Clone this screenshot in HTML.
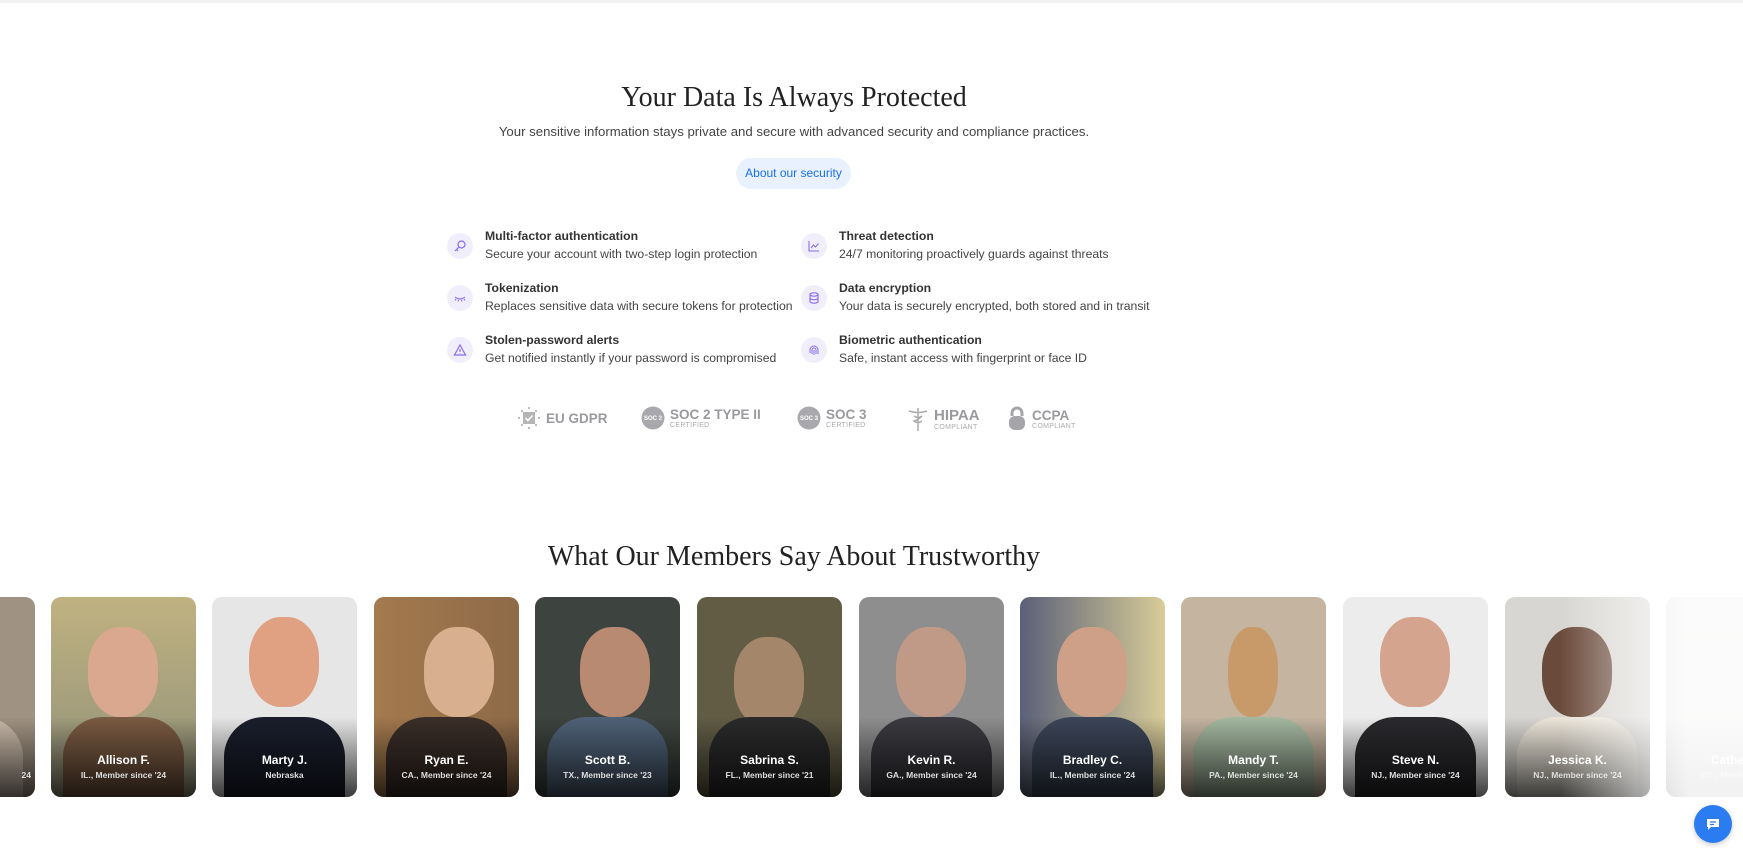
<!DOCTYPE html>
<html><head><meta charset="utf-8"><style>
*{margin:0;padding:0;box-sizing:border-box}
body{width:1743px;height:848px;overflow:hidden;background:#fff;font-family:"Liberation Sans",sans-serif;position:relative;color:#333}
.topline{position:absolute;left:0;top:0;width:1743px;height:3px;background:#f1f1f3}
.h{position:absolute;left:0;width:1588px;text-align:center;font-family:"Liberation Serif",serif;color:#222;font-size:28px}
.sub{position:absolute;top:124px;left:0;width:1588px;text-align:center;font-size:13.2px;color:#444}
.btn{position:absolute;left:736px;top:158px;width:115px;height:31px;border-radius:16px;background:#e8f1fd;color:#1a6fe8;font-size:12px;text-align:center;line-height:31px}
.f{position:absolute}
.ic{position:absolute;left:0;top:0;width:26px;height:26px;border-radius:50%;background:#f1eefc;display:flex;align-items:center;justify-content:center}
.ft{position:absolute;left:38px;top:-4px;white-space:nowrap;font-size:12.2px;color:#333;font-weight:bold}
.fd{position:absolute;left:38px;top:14px;white-space:nowrap;font-size:12.2px;color:#444}
.logo{position:absolute;top:406px;color:#9a9a9e;font-weight:bold;font-size:13.5px;display:flex;align-items:center;gap:5px}
.logo small{display:block;font-size:7px;font-weight:normal;color:#aaa;letter-spacing:.3px}
.card{position:absolute;top:597px;width:145px;height:200px;border-radius:10px;overflow:hidden}
.card .ov{position:absolute;left:0;right:0;bottom:0;height:80px;background:linear-gradient(rgba(0,0,0,0),rgba(0,0,0,.75))}
.card .n{position:absolute;left:0;right:0;top:156px;text-align:center;color:#fff;font-weight:bold;font-size:12px}
.card .m{position:absolute;left:0;right:0;top:173px;text-align:center;color:#ddd;font-weight:bold;font-size:8.5px}
.face{position:absolute;left:37px;top:30px;width:70px;height:90px;border-radius:45%;}
.body{position:absolute;left:12px;top:120px;width:121px;height:90px;border-radius:40px 40px 0 0}
.fade{position:absolute;left:1560px;top:590px;width:183px;height:215px;background:linear-gradient(90deg,rgba(255,255,255,0),rgba(255,255,255,.85) 70%)}
.chat{position:absolute;left:1694px;top:805px;width:38px;height:38px;border-radius:50%;background:#2b7cf0;display:flex;align-items:center;justify-content:center;box-shadow:0 2px 6px rgba(0,0,0,.2)}
</style></head><body>
<div class="topline"></div>
<div class="h" style="top:82px">Your Data Is Always Protected</div>
<div class="sub">Your sensitive information stays private and secure with advanced security and compliance practices.</div>
<div class="btn">About our security</div>

<div class="f" style="left:447px;top:233px"><div class="ic"><svg width="14" height="14" viewBox="0 0 14 14" fill="none" stroke="#8b6cf0" stroke-width="1.2"><circle cx="8.5" cy="5.5" r="3.5"/><path d="M6 8L2 12M3.5 10.5l1.5 1.5"/></svg></div><div class="ft">Multi-factor authentication</div><div class="fd">Secure your account with two-step login protection</div></div>
<div class="f" style="left:447px;top:285px"><div class="ic"><svg width="14" height="14" viewBox="0 0 14 14" fill="none" stroke="#8b6cf0" stroke-width="1.1"><path d="M2 6q5 4 10 0M3 8l-1 1.5M5.5 9l-.5 1.5M8.5 9l.5 1.5M11 8l1 1.5"/></svg></div><div class="ft">Tokenization</div><div class="fd">Replaces sensitive data with secure tokens for protection</div></div>
<div class="f" style="left:447px;top:337px"><div class="ic"><svg width="14" height="14" viewBox="0 0 14 14" fill="none" stroke="#8b6cf0" stroke-width="1.2"><path d="M7 2L1.5 12h11z M7 6v3M7 10.3v.5"/></svg></div><div class="ft">Stolen-password alerts</div><div class="fd">Get notified instantly if your password is compromised</div></div>
<div class="f" style="left:801px;top:233px"><div class="ic"><svg width="14" height="14" viewBox="0 0 14 14" fill="none" stroke="#8b6cf0" stroke-width="1.1"><path d="M2 2v10h10M4 9l2.5-3 2 2 3-3.5"/></svg></div><div class="ft">Threat detection</div><div class="fd">24/7 monitoring proactively guards against threats</div></div>
<div class="f" style="left:801px;top:285px"><div class="ic"><svg width="14" height="14" viewBox="0 0 14 14" fill="none" stroke="#8b6cf0" stroke-width="1.2"><ellipse cx="7" cy="3.5" rx="4" ry="1.7"/><path d="M3 3.5v7c0 1 1.8 1.7 4 1.7s4-.7 4-1.7v-7M3 7c0 1 1.8 1.7 4 1.7S11 8 11 7"/></svg></div><div class="ft">Data encryption</div><div class="fd">Your data is securely encrypted, both stored and in transit</div></div>
<div class="f" style="left:801px;top:337px"><div class="ic"><svg width="14" height="14" viewBox="0 0 14 14" fill="none" stroke="#8b6cf0" stroke-width="1"><path d="M3 10V7a4 4 0 018 0v4M5 11V7a2 2 0 014 0v4M7 7v5"/></svg></div><div class="ft">Biometric authentication</div><div class="fd">Safe, instant access with fingerprint or face ID</div></div>

<div class="logo" style="left:517px"><svg width="24" height="24" viewBox="0 0 24 24"><g fill="#aaa"><circle cx="12" cy="2" r="1"/><circle cx="12" cy="22" r="1"/><circle cx="2" cy="12" r="1"/><circle cx="22" cy="12" r="1"/><circle cx="5" cy="5" r="1"/><circle cx="19" cy="5" r="1"/><circle cx="5" cy="19" r="1"/><circle cx="19" cy="19" r="1"/></g><rect x="6" y="6" width="12" height="12" fill="#b5b5b8"/><path d="M8.5 12l2.5 2.5 4.5-5" stroke="#fff" stroke-width="1.5" fill="none"/></svg>EU GDPR</div>
<div class="logo" style="left:641px"><svg width="24" height="24"><circle cx="12" cy="12" r="11.5" fill="#a9a9ad"/><text x="12" y="14" font-size="6" fill="#fff" text-anchor="middle" font-family="Liberation Sans">SOC 2</text></svg><div>SOC 2 TYPE II<small>CERTIFIED</small></div></div>
<div class="logo" style="left:797px"><svg width="24" height="24"><circle cx="12" cy="12" r="11.5" fill="#a9a9ad"/><text x="12" y="14" font-size="6" fill="#fff" text-anchor="middle" font-family="Liberation Sans">SOC 3</text></svg><div>SOC 3<small>CERTIFIED</small></div></div>
<div class="logo" style="left:907px"><svg width="22" height="26" viewBox="0 0 22 26" fill="none" stroke="#aaa" stroke-width="1.5"><path d="M11 2v23M2 5q9 3 18 0M7 10q4 3 8 0q-4 4-8 5q4 3 8 0"/></svg><div style="font-size:15px">HIPAA<small>COMPLIANT</small></div></div>
<div class="logo" style="left:1007px"><svg width="20" height="26" viewBox="0 0 20 26"><path d="M5 10V7a5 5 0 0110 0v3" stroke="#a5a5a9" stroke-width="3" fill="none"/><rect x="2" y="10" width="16" height="14" rx="6" fill="#a5a5a9"/></svg><div>CCPA<small>COMPLIANT</small></div></div>

<div class="h" style="top:541px;font-size:28px">What Our Members Say About Trustworthy</div>

<div class="card" style="left:-110px;background:#a09282"><div class="body" style="background:#c8b8a8"></div><div class="ov"></div><div class="m" style="text-align:right;padding-right:4px">24</div></div>
<div class="card" style="left:51px;background:linear-gradient(#c0b280,#8e8f7a)"><div class="face" style="background:#d9a88e"></div><div class="body" style="background:#7a5a42"></div><div class="ov"></div><div class="n">Allison F.</div><div class="m">IL., Member since '24</div></div>
<div class="card" style="left:212px;background:#e6e6e6"><div class="face" style="background:#e0a082;top:20px"></div><div class="body" style="background:#1a1e2c"></div><div class="ov"></div><div class="n">Marty J.</div><div class="m">Nebraska</div></div>
<div class="card" style="left:374px;background:linear-gradient(90deg,#a47a4e,#8e6a48)"><div class="face" style="background:#d8b090;left:50px"></div><div class="body" style="background:#3a2e28"></div><div class="ov"></div><div class="n">Ryan E.</div><div class="m">CA., Member since '24</div></div>
<div class="card" style="left:535px;background:#3d433e"><div class="face" style="background:#b88a72;left:45px"></div><div class="body" style="background:#4f6278"></div><div class="ov"></div><div class="n">Scott B.</div><div class="m">TX., Member since '23</div></div>
<div class="card" style="left:697px;background:#625c45"><div class="face" style="background:#a4866a;top:40px"></div><div class="body" style="background:#2a2a2a"></div><div class="ov"></div><div class="n">Sabrina S.</div><div class="m">FL., Member since '21</div></div>
<div class="card" style="left:859px;background:#8e8e8e"><div class="face" style="background:#c09a86"></div><div class="body" style="background:#3a3a40"></div><div class="ov"></div><div class="n">Kevin R.</div><div class="m">GA., Member since '24</div></div>
<div class="card" style="left:1020px;background:linear-gradient(90deg,#5a6078,#d8cc98)"><div class="face" style="background:#cfa088"></div><div class="body" style="background:#3c4658"></div><div class="ov"></div><div class="n">Bradley C.</div><div class="m">IL., Member since '24</div></div>
<div class="card" style="left:1181px;background:#c4b4a0"><div class="face" style="background:#c89a6a;width:50px;left:47px"></div><div class="body" style="background:#a4b8a0"></div><div class="ov"></div><div class="n">Mandy T.</div><div class="m">PA., Member since '24</div></div>
<div class="card" style="left:1343px;background:#ececec"><div class="face" style="background:#d4a48e;top:20px"></div><div class="body" style="background:#2a2a2e"></div><div class="ov"></div><div class="n">Steve N.</div><div class="m">NJ., Member since '24</div></div>
<div class="card" style="left:1505px;background:#d8d6d2"><div class="face" style="background:#6a4a3a"></div><div class="body" style="background:#ece6da"></div><div class="ov"></div><div class="n">Jessica K.</div><div class="m">NJ., Member since '24</div></div>
<div class="card" style="left:1666px;background:#e4e4e2"><div class="ov" style="opacity:.4"></div><div class="n">Catherine</div><div class="m">CO., Member since</div></div>
<div class="fade"></div>
<div class="chat"><svg width="16" height="16" viewBox="0 0 16 16"><path d="M2 3h12v8H6l-3 3v-3H2z" fill="#fff"/><path d="M5 6h6M5 8.5h4" stroke="#2b7cf0" stroke-width="1.2"/></svg></div>
</body></html>
